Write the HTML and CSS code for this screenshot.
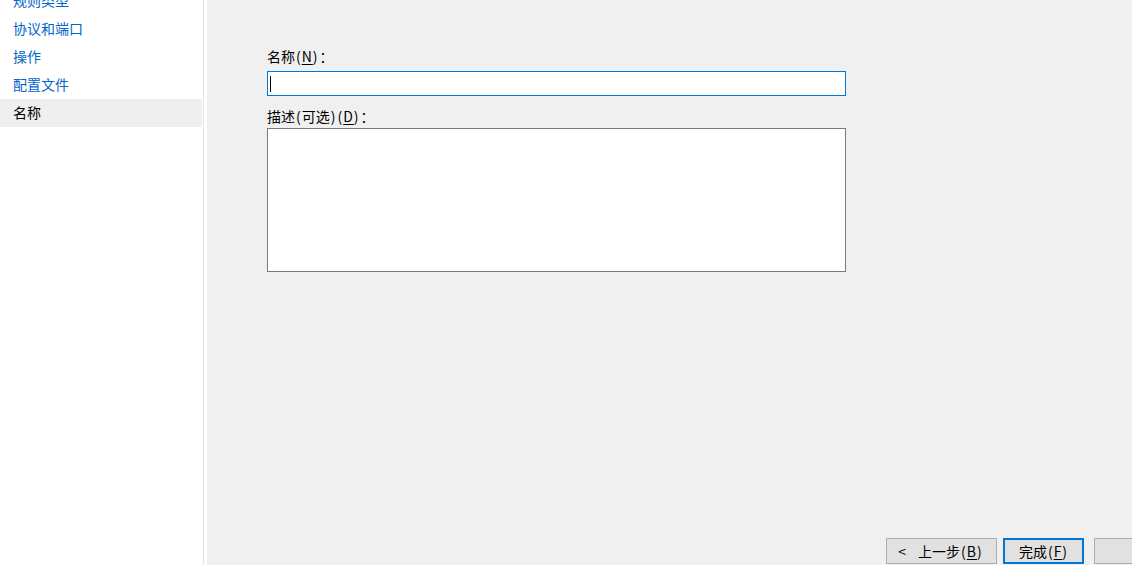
FILE: index.html
```html
<!DOCTYPE html>
<html lang="zh-CN">
<head>
<meta charset="utf-8">
<title>新建入站规则向导</title>
<link rel="stylesheet" href="styles.css">
</head>
<body>
<div class="window">
  <nav class="steps">
    <ul class="step-list">
      <li class="step">规则类型</li>
      <li class="step">协议和端口</li>
      <li class="step">操作</li>
      <li class="step">配置文件</li>
      <li class="step current">名称</li>
    </ul>
  </nav>
  <div class="splitter"></div>
  <main class="content">
    <div class="form">
      <label class="label">名称<span class="a">(<u>N</u>)</span><span class="colon">：</span></label>
      <div class="textbox"><span class="caret"></span></div>
      <label class="label label-desc">描述<span class="a">(</span>可选<span class="a">)</span><span class="a">(<u>D</u>)</span><span class="colon">：</span></label>
      <div class="textarea"></div>
    </div>
    <div class="buttons">
      <button class="btn btn-back"><span class="chev">&lt;</span>上一步<span class="a">(<u>B</u>)</span></button>
      <button class="btn btn-default">完成<span class="a">(<u>F</u>)</span></button>
      <button class="btn btn-cancel"></button>
    </div>
  </main>
</div>
</body>
</html>
```

FILE: styles.css
```css
html, body {
  margin: 0;
  padding: 0;
  height: 100%;
  overflow: hidden;
}

body {
  font-family: "Noto Sans CJK SC", "Noto Sans", "Liberation Sans", sans-serif;
  font-size: 14px;
  color: #000;
  background: #f0f0f0;
}

.window {
  display: flex;
  width: 1132px;
  height: 565px;
  overflow: hidden;
}

.steps {
  width: 203px;
  flex: none;
  background: #ffffff;
  border-right: 1px solid #e3e3e3;
  overflow: hidden;
}

.step-list {
  list-style: none;
  margin: -13px 0 0 0;
  padding: 0;
}

.step {
  height: 28px;
  line-height: 26px;
  padding-bottom: 2px;
  box-sizing: border-box;
  padding-left: 13px;
  color: #0066cc;
  white-space: nowrap;
}

.step.current {
  color: #000;
  background: #efefef;
  margin-right: 1px;
}

.splitter {
  width: 3px;
  flex: none;
  background: #ffffff;
}

.content {
  flex: 1;
  display: flex;
  flex-direction: column;
  background: #f0f0f0;
  min-width: 0;
  overflow: hidden;
}

.form {
  display: flex;
  flex-direction: column;
  padding: 47px 0 0 60px;
}

.label {
  display: block;
  height: 18px;
  line-height: 18px;
  margin-bottom: 6px;
  white-space: nowrap;
}

.a {
  letter-spacing: 1px;
  padding-left: 1px;
}

u {
  text-underline-offset: 2px;
}

.colon {
  font-family: "Noto Sans CJK TC", "Noto Sans CJK SC", sans-serif;
  margin-left: 1px;
}

.label-desc {
  margin-top: 11px;
  margin-bottom: 3px;
}

.textbox {
  box-sizing: border-box;
  width: 579px;
  height: 25px;
  border: 1px solid #0078d7;
  background: #ffffff;
  display: flex;
  align-items: center;
  padding-left: 2px;
}

.caret {
  display: inline-block;
  width: 1px;
  height: 16px;
  background: #000;
}

.textarea {
  box-sizing: border-box;
  width: 579px;
  height: 144px;
  border: 1px solid #7a7a7a;
  background: #ffffff;
}

.buttons {
  margin-top: auto;
  display: flex;
  padding: 0 0 1px 679px;
  gap: 5px;
}

.btn {
  flex: none;
  box-sizing: border-box;
  height: 26px;
  padding: 0;
  font-family: inherit;
  font-size: 14px;
  line-height: 22px;
  color: #000;
  background: #e1e1e1;
  border: 1px solid #adadad;
  white-space: nowrap;
}

.btn-back {
  width: 111px;
  padding-right: 2px;
}

.chev {
  margin-right: 12px;
}

.btn-default {
  width: 81px;
  border: 2px solid #0078d7;
  margin-left: 1px;
}

.btn-cancel {
  width: 80px;
  margin-left: 5px;
}
```
